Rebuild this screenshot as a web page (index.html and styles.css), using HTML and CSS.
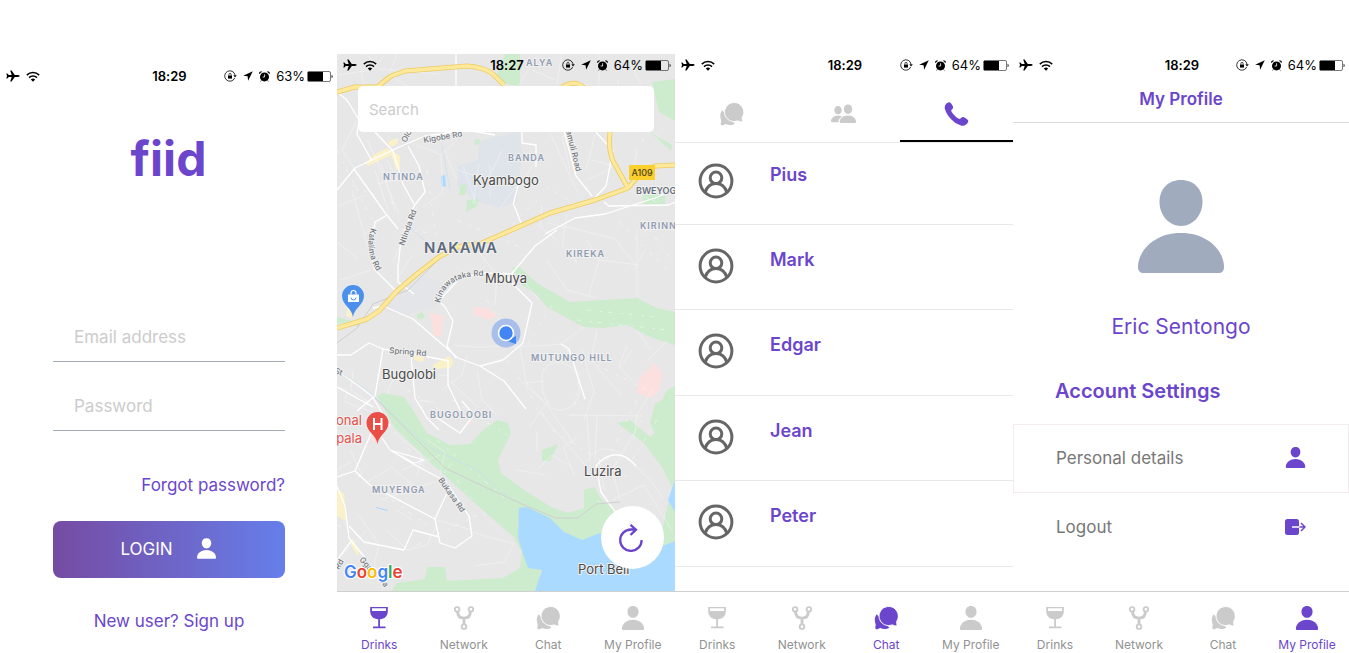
FILE: index.html
```html
<!DOCTYPE html>
<html lang="en">
<head>
<meta charset="utf-8">
<meta name="viewport" content="width=device-width, initial-scale=1">
<title>fiid</title>
<link rel="stylesheet" href="styles.css">
</head>
<body>
<svg class="sprite" aria-hidden="true">
  <symbol id="plane" viewBox="0 0 14 12"><path d="M13.6 6c0-.7-1-.9-2-.9H8.8L5.6.4H4.2l1.5 4.7H2.8L1.3 3.6H.3L1 6l-.7 2.4h1l1.5-1.5h2.9l-1.5 4.7h1.4l3.2-4.7h2.8c1 0 2-.2 2-.9z"/></symbol>
  <symbol id="wifi" viewBox="0 0 14 11"><g fill="none" stroke="currentColor" stroke-width="1.500"><path d="M.8 4.100a8.800 8.800 0 0 1 12.400 0"/><path d="M3 6.600a5.700 5.700 0 0 1 8 0"/></g><path d="M4.800 8.500a3.100 3.100 0 0 1 4.400 0L7 10.800z"/></symbol>
  <symbol id="lock" viewBox="0 0 13 12"><path d="M10.700 8A5.200 5.200 0 1 1 11 5" fill="none" stroke="currentColor" stroke-width=".8"/><path d="M9.400 5.300h3.400L11 7.500z"/><path d="M4 5.600h4v3H4z"/><path d="M4.900 5.800V4.500a1.100 1.100 0 0 1 2.200 0v1.300" fill="none" stroke="currentColor" stroke-width=".7"/></symbol>
  <symbol id="arrow" viewBox="0 0 10 10"><path d="M9.8.2.2 4.700l4.400.5.5 4.500z"/></symbol>
  <symbol id="alarm" viewBox="0 0 11 11"><circle cx="5.500" cy="5.900" r="4.500"/><path d="M.6 2.700A2 2 0 0 1 2.700.7M8.300.7a2 2 0 0 1 2.100 2" fill="none" stroke="currentColor" stroke-width="1.100"/><path d="M2.300 9.500l-.6.900M8.700 9.500l.6.900" stroke="currentColor"/><path d="M5.600 3.300V6H3.600" fill="none" stroke="#fff" stroke-width=".8"/></symbol>
  <symbol id="battery" viewBox="0 0 26 11"><rect x=".5" y=".5" width="23" height="10" rx="1.500" fill="none" stroke="#555" stroke-width=".8"/><path d="M1 1h15v9H1z"/><path d="M24.600 3.800c1.400.4 1.400 3 0 3.400z"/></symbol>
  <symbol id="person" viewBox="0 0 86 93"><path d="M43 0c13 0 21.500 9 21.500 22S55 46 43 46 21.500 35 21.500 22 30 0 43 0z"/><path d="M43 53c27 0 43 18 43 34 0 4-2 6-6 6H6c-4 0-6-2-6-6 0-16 16-34 43-34z"/></symbol>
  <symbol id="wine" viewBox="0 0 18 22"><path fill-rule="evenodd" d="M.2 0h17.600v4.500C17.800 9 14.500 12 10 12.300V19.600h5.500V21.200H3V19.600h5.200V12.300C3.500 12 .2 9 .2 4.500zM2 1.300v2.600h14V1.300z"/></symbol>
  <symbol id="network" viewBox="0 0 21 25"><g fill="none" stroke="currentColor"><g stroke-width="1.900"><circle cx="3.300" cy="3.500" r="2.400"/><circle cx="17.700" cy="3.500" r="2.400"/><circle cx="10.500" cy="21.500" r="2.400"/></g><path d="M3.900 6c0 4.700 3.100 6.600 6.600 6.600s6.600-1.900 6.600-6.600M10.500 12.500v6.500" stroke-width="3"/></g></symbol>
  <symbol id="chat" viewBox="0 0 24 25"><path d="M2.200 8.500C-.6 12.500.3 16.500 1.200 19c.4 1.800-1.200 4 .3 5 1.500.7 3-.7 4.500-1.200 3.500 1.900 7 1.200 9.500-.2z"/><path class="bubble" d="M13.900.5A10 10 0 1 0 18.500 19.700c1.500.3 4 1.700 4.700.9.700-.9-.4-3-.1-4.500A10.100 10.100 0 0 0 13.900.5z"/></symbol>
  <symbol id="people" viewBox="0 0 25 19"><path d="M7 1.500c2.300 0 3.700 1.700 3.700 4.100S9.300 9.800 7 9.800 3.400 8 3.400 5.600 4.700 1.500 7 1.500zM11 12c-1.300-.8-2.700-1-4-1-4 0-7 3-7 5.500 0 1 .5 1.300 1.200 1.300h6.300c0-2.300 1-4.300 3.500-5.800z"/><path d="M17 0c2.500 0 4.200 1.900 4.200 4.600S19.500 9.400 17 9.400s-4.200-2.100-4.200-4.800S14.500 0 17 0zM17 11c5 0 8 3 8 6 0 1-.5 1.500-1.400 1.500H10.200c-.9 0-1.400-.5-1.400-1.500 0-3 3.200-6 8.200-6z"/></symbol>
  <symbol id="phone" viewBox="0 0 24 24"><path d="M1.300 2.300C2.400.8 4.300-.4 5.600.5c1.400 1.100 2.700 3.100 3 4.600.2 1.200-.8 1.800-1.500 2.600-.6.700-.4 1.300 0 2 1.700 2.700 4 5 6.800 6.900.8.500 1.500.6 2.100 0 .9-.8 1.500-1.900 2.800-1.600 1.500.4 3.300 1.800 4.500 3.100 1.200 1.400-.4 3.300-1.800 4.500-1.300 1.200-3 1.500-5 .9C8.700 20.800 2.800 14.400.5 7.200-.1 5.400.2 3.600 1.300 2.300z"/></symbol>
  <symbol id="contact" viewBox="0 0 36 36"><g fill="none" stroke="currentColor" stroke-width="3"><circle cx="18" cy="18" r="15.900"/><circle cx="18" cy="14.800" r="5.800"/><path d="M7 29.500c2-6 6-8.900 11-8.900s9 2.900 11 8.900"/></g></symbol>
  <symbol id="logout" viewBox="0 0 21 16"><path d="M2.500 0h9Q14 0 14 2.500v11Q14 16 11.500 16h-9Q0 16 0 13.500v-11Q0 0 2.500 0z"/><path d="M7 8h7.500" stroke="#fff" stroke-width="1.500" fill="none"/><path d="M14.500 8h5.500M16 4l4 4-4 4" stroke="currentColor" stroke-width="1.500" fill="none"/></symbol>
  <symbol id="refresh" viewBox="0 0 24 28"><path d="M22.600 16a10.700 10.700 0 1 1-10.700-10.500h5M11.500.800l5.500 4.900-5.500 5.300" fill="none" stroke="currentColor" stroke-width="2.300"/></symbol>
</svg>

<main class="screens">

  <section class="screen screen-login" aria-label="Log in">
    <div class="status">
      <div class="status-left"><svg class="i-plane"><use href="#plane"/></svg><svg class="i-wifi"><use href="#wifi"/></svg></div>
      <time class="status-time">18:29</time>
      <div class="status-right"><svg class="i-lock"><use href="#lock"/></svg><svg class="i-arrow"><use href="#arrow"/></svg><svg class="i-alarm"><use href="#alarm"/></svg><span>63%</span><svg class="i-battery"><use href="#battery"/></svg></div>
    </div>
    <h1 class="logo">fiid</h1>
    <form class="login">
      <input class="field" type="email" placeholder="Email address" aria-label="Email address">
      <input class="field" type="password" placeholder="Password" aria-label="Password">
      <a class="forgot" href="#forgot">Forgot password?</a>
      <button class="login-button" type="button">LOGIN <svg><use href="#person"/></svg></button>
      <a class="signup" href="#signup">New user? Sign up</a>
    </form>
  </section>

  <section class="screen" aria-label="Drinks">
    <div class="map-area">
      <svg class="map" viewBox="0 54 338 537" preserveAspectRatio="xMidYMid slice" role="img" aria-label="Map of Kampala">
        <rect y="54" width="338" height="537" fill="#e7e7e7"/>
        <g fill="#dfe3ea">
          <path d="M142 141l41-10 2 22-5 48-17 7-25-7-18-15 1-20 20-6z"/>
          <path d="M60 291l20-17 28 10-8 22-32 9-26-6z" opacity=".5"/>
        </g>
        <g fill="#cdebcd">
          <path d="M168 54h15v32l-14-2-9-10z"/>
          <path d="M315 82l23-3v42l-16-9zM313 132l22 13-1 6zM305 195h23v11l-21-2z"/>
          <path d="M123 185l6-1-1 11h-6zM130 200l12-1-2 7-11 6zM137 140l6-1-1 5-4 1z"/>
          <path d="M80 315l4-3 4 3-2 4h-6zM0 317l15 4-15 3zM16 325l6-3v5z"/>
          <path d="M175 268l7-1 18 16 33 19 34-2 33-2 20 10 18 4v33l-25-8-23-12-23 3-20-1-17-9-20-11-10-12-15-10z"/>
          <path d="M40 396l6-3 21 4 11 16 12 20 23 12 20-1 14-15 13-9 11 3 3 10-13 27 3 13 23 17 27 17 17 6 16-5v-18l10-3 8 13 12 10 0 30H200l5 25-6 33H50l10-15 28-4 2-12h18l2 14 56-3 17-10 2-16-8-15-36-31-47-43-37-36z"/>
          <path d="M325 400l5-10 8-4v155l-20 8-15-18 23-4 9-40-10-20-18-24-27-20 13-3 20 17 5-4-5-10 5-19zM205 450l16-6-8 17h-8z"/>
        </g>
        <g fill="#aadaff">
          <path d="M182 508l8-1 23 11 14 14 18 8 18-7 20 10 40 4 15-6v50H198l7-21-14-2-5-14-5-16z"/>
          <path d="M338 480l-7 20 7 12zM104 176l4-1 1 11-4 1zM39 507l12 3-1 1-11-3z"/>
        </g>
        <g fill="#fbe0df">
          <path d="M93 313l14 3-3 20-7 1zM137 307l13 1 10 8-8 4-15-5zM303 377l15-14 8 12-4 16-8 7-15-5zM130 423l6-3-2 6zM33 434l8 2v8l-6-2z"/>
        </g>
        <g fill="#fbf1c9">
          <path d="M28 163l10-9 12-6 13 8v14l-4-1-5-14-23 11zM51 142l9-4 1 6-8 3zM96 365l16-9 5 6-4 6-16 1zM77 355l10 2-1 5-9-2zM10 308l8 2-4 8-5-2zM0 490l7 3 2 28-9-5zM15 538l8 14-3 3-7-12z"/>
        </g>
        <g class="thin">
          <path d="M0 75l35-5 12-14M30 54l12 15 60 5M60 54l-8 20 18 12M180 88l20-32M195 70l23 10M225 54l-5 30M262 54v32M290 58l14 26M24 70l5 24M20 120l-15 30 20 30M30 140l12 26 20 48M38 170l14 44M44 163l14 48M50 160l10 20-20 4M80 145l24 10 2 38-20 14M104 155l16-15M107 150l13 30M120 170l38 12M126 166l13 38M142 164l-6 40M153 165v33M165 150l-12 25M163 208l18-24M225 135l8 34M213 133l28 60M258 135l-9 35M255 160l22 6M251 180l30-16M300 150l-5 35M195 166l-10 18M205 205l-2 22 18 14M290 190l30 12M230 215l-5 30 15 18M210 260l20 30 30 8M250 240l12 20-10 35M300 230v65M262 260l40 5M226 226l52 13 20 25M140 250l20 25-2 30M80 207l-24 55M50 215l-22 19M15 190l15 55M0 207l28-12"/>
          <path d="M117 345l22 2 62-1 23-2M183 347l7 40 16 14M224 344l23-17M205 380c-2-22 26-22 34-6s2 34-14 36-20-18-20-30M185 383l22-2M245 350l12 42-10 28M260 330l-6 30 30 35M290 346l-8 20 14 16M300 330l14 20M315 390l-15 25-3 24M60 370l-10 24M85 373l27 3M112 380l30 28M130 355l-5 20-20 15M88 415l-5-15 14 2M140 370l5 30 15 15M0 387l10 3-2 12 35 13M16 370l-2 20 25 18M190 383l20 22 28 40M212 400l-20 28M230 415l75 1M250 416l3 46M260 416l-2 45M305 420l-30 50 8 30M240 438l-14 9 12 30M199 408l50 58M249 462c10-15 24-18 40-4s30 26 36 40M267 490l-5-32M275 500l32-15 28 46M200 470l15-15 20 12M180 470l28 5"/>
          <path d="M0 430l25 18M0 470l14-8M30 482l25-15 20 18M43 500l55-18M60 435l25 20-5 22M65 470l38-15M90 440l18 12-5 22M22 515l20 30-5 20M50 530l20 20 20-5 10-20M100 520l35 10M135 532l42 12-10 18-30 4M0 560l30-30M13 450l12 25M115 463l-8 10M60 510l15 10M200 432v20M0 242l20 16M4 280l30-10M60 280l15-25M240 100l10 30M190 285l12 15M210 222l18 6M308 250l-12 20M320 225l-15 8M330 340l-20 22M295 350l-12 18"/>
        </g>
        <g class="dashes"><path d="M8 100l30 30M15 185l45 20M55 105l5 36M90 170l8 60M65 230l40 4M120 220l70 30M150 300l30 50M170 360l40 60M215 305l-25 40M230 350l80 40M245 360l-10 60M215 430l80 50M300 400l-30 60M260 500l40 30M30 400l60 70M20 475l70 50M80 545l60-30M0 525l40 20M115 400l55 35M320 420l-25 40M330 270l-50-50M200 180l60 40M240 320l90 10M250 310l70 7M296 100l30 45M305 220l30 40M70 390l50 30M100 440l70 60M120 480l40 50M0 150l40 80M280 80l30 70M160 240l40-40"/></g>
        <g class="wide">
          <path d="M0 92l10 8 12 20-2 14 15 27M38 132l18 19 10 33 11 20M71 146l11 20 6 26-11 14M17 169l32 45 12 15M0 190l18-22 42-20 28-12 42-6 28 5M77 206l-13 34-3 27v15l16 12M50 215l-12 7-5 25 4 22 24 24M185 131v12l14 2v22M177 205l7 18M183 178l-7 27M119 54v32M227 131l12 45 16 20M258 131l18 20-7 35-14 15M267 202l5 4 60-1 6-3M338 190l-20 8-50 16-30 4-30 16"/>
          <path d="M220 230l-22 16-21 25-6 8 24 24-9 40-20 17-23 6-22-8-45-39-30-13-10 2M174 274l-30-1-22 6-20 22 6 6 8 14-6 25 9 12M0 355h14l18-12 14 6 36 6 30 6M46 349l-8 47-18 15M74 356l4 42 12 20 12 12M111 360v25l12 25M143 366l24 15 22 28M0 370l35 26 18 30M0 387l36 20M125 401l12 14-14 18-24-16M41 417l-23 54-18 6M18 471l15 14 65 34 12-26M98 519l5 24 15 5 17-12-3-20-20-30M102 537l-26-7-9 20-40-8-15-16M53 450l34 10-10 3-24-13M45 438l8 12 25 15 32 17M0 486l8 20 4 32 18 22M0 560l15-20M259 466c12-15 28-15 40 0M259 466l5 26 20 28M224 344l8 5 16 50"/>
        </g>
        <path d="M0 343l20-15 16-24 35-14 20-20 14-14c18-8 30-8 40-4M38 398l70 70 42 20 35 16 34 14 22 0 18-14 24-2" fill="none" stroke="#cfcfcf"/>
        <path d="M70 225l23 20M105 145l8 45M0 370l30 20 60 56 50 24 34 30" fill="none" stroke="#c9dfec" stroke-width=".7"/>
        <g class="highway-edge"><path id="hwyA" d="M0 92l18-5 22 0 14-11 14-5 62-5q18 1 27 9l10 10M225 87q14-8 22 1 25 17 26 45-2 16 3 28l15 27"/><path id="hwyB" d="M338 165l-20 1-15 8-12 14-33 12-45 13-43 19-25 11-25 4-18 10-22 17-20 17-18 20-12 8-30 9"/></g>
        <g class="highway"><use href="#hwyA"/><use href="#hwyB"/></g>

        <g class="road-name">
          <text transform="translate(87 143) rotate(-10)">Kigobe Rd</text>
          <text transform="translate(69 143) rotate(-63)">Olo</text>
          <text transform="translate(229 131) rotate(76)">amuli Road</text>
          <text transform="translate(67 246) rotate(-70)">Ntinda Rd</text>
          <path id="kat" d="M34 228q-8 26 10 49" fill="none"/><text><textPath href="#kat">Katalima Rd</textPath></text>
          <path id="kin" d="M103 303q5-28 44-27" fill="none"/><text><textPath href="#kin">Kinawataka Rd</textPath></text>
          <text transform="translate(52 353) rotate(5)">Spring Rd</text>
          <text transform="translate(101 480) rotate(55)">Bukasa Rd</text>
          <text transform="translate(22 560) rotate(48)">Gga</text>
          <text transform="translate(42 580) rotate(55)">ba</text>
          <text transform="translate(2 570) rotate(-60)">Rd</text>
          <text transform="translate(-3 373) rotate(20)">St</text>
        </g>
        <g class="district">
          <text x="189" y="66">ALYA</text><text x="171" y="161">BANDA</text><text x="46" y="180">NTINDA</text>
          <text x="303" y="229">KIRINN</text><text x="229" y="257">KIREKA</text><text x="194" y="361">MUTUNGO HILL</text>
          <text x="93" y="418">BUGOLOOBI</text><text x="35" y="493">MUYENGA</text>
          <text class="dark" x="299" y="194">BWEYOG</text>
        </g>
        <text class="city" x="87" y="253">NAKAWA</text>
        <g class="town">
          <text x="136" y="185">Kyambogo</text><text x="148" y="283">Mbuya</text><text x="45" y="379">Bugolobi</text>
          <text x="247" y="476">Luzira</text><text x="241" y="574">Port Bell</text>
        </g>
        <g class="hospital"><text x="25" y="425">onal</text><text x="25" y="443">pala</text></g>
        <rect x="292" y="165" width="26" height="15" rx="1" fill="#fbcf2c"/><text class="shield" x="305" y="176">A109</text>
        <path d="M16 317c-1-9-11-12-11-21a11 11 0 0 1 22 0c0 9-10 12-11 21z" fill="#4c90ed"/>
        <path d="M11 294.500h11V302H11z" fill="#fff"/><path d="M14 294.500v-1.500a2.500 2.500 0 0 1 5 0v1.500" fill="none" stroke="#fff" stroke-width="1.200"/><path d="M14 297.500a2.500 2.500 0 0 0 5 0" fill="none" stroke="#4c90ed"/>
        <path d="M40.500 444c-1-9-11-12-11-21a11 11 0 0 1 22 0c0 9-10 12-11 21z" fill="#ea4f47"/><path d="M37 418v12M44.500 418v12M37 424h7.500" stroke="#fff" stroke-width="2" fill="none"/>
        <circle cx="169" cy="333" r="14.500" fill="#7ea5ee" opacity=".6"/><path d="M179 336v8l-9-3z" fill="#4285f4"/><circle cx="169" cy="333" r="7.500" fill="#4285f4" stroke="#fff" stroke-width="1.600"/>
        <text class="google" x="7" y="578"><tspan fill="#4285f4">G</tspan><tspan fill="#ea4335">o</tspan><tspan fill="#fbbc05">o</tspan><tspan fill="#4285f4">g</tspan><tspan fill="#34a853">l</tspan><tspan fill="#ea4335">e</tspan></text>
      </svg>
      <div class="map-top">
        <div class="status">
          <div class="status-left"><svg class="i-plane"><use href="#plane"/></svg><svg class="i-wifi"><use href="#wifi"/></svg></div>
          <time class="status-time">18:27</time>
          <div class="status-right"><svg class="i-lock"><use href="#lock"/></svg><svg class="i-arrow"><use href="#arrow"/></svg><svg class="i-alarm"><use href="#alarm"/></svg><span>64%</span><svg class="i-battery"><use href="#battery"/></svg></div>
        </div>
        <input class="search" type="search" placeholder="Search" aria-label="Search">
      </div>
      <button class="refresh" type="button" aria-label="Refresh"><svg><use href="#refresh"/></svg></button>
    </div>
    <nav class="tabs">
      <a class="active" href="#drinks"><svg class="i-wine"><use href="#wine"/></svg>Drinks</a>
      <a href="#network"><svg><use href="#network"/></svg>Network</a>
      <a href="#chat"><svg><use href="#chat"/></svg>Chat</a>
      <a href="#profile"><svg><use href="#person"/></svg>My Profile</a>
    </nav>
  </section>

  <section class="screen" aria-label="Chat">
    <div class="status">
      <div class="status-left"><svg class="i-plane"><use href="#plane"/></svg><svg class="i-wifi"><use href="#wifi"/></svg></div>
      <time class="status-time">18:29</time>
      <div class="status-right"><svg class="i-lock"><use href="#lock"/></svg><svg class="i-arrow"><use href="#arrow"/></svg><svg class="i-alarm"><use href="#alarm"/></svg><span>64%</span><svg class="i-battery"><use href="#battery"/></svg></div>
    </div>
    <nav class="top-tabs">
      <a href="#messages" aria-label="Messages"><svg><use href="#chat"/></svg></a>
      <a href="#groups" aria-label="Groups"><svg><use href="#people"/></svg></a>
      <a class="active" href="#calls" aria-label="Calls"><svg><use href="#phone"/></svg></a>
    </nav>
    <ul class="contacts">
      <li><svg><use href="#contact"/></svg><span>Pius</span></li>
      <li><svg><use href="#contact"/></svg><span>Mark</span></li>
      <li><svg><use href="#contact"/></svg><span>Edgar</span></li>
      <li><svg><use href="#contact"/></svg><span>Jean</span></li>
      <li><svg><use href="#contact"/></svg><span>Peter</span></li>
    </ul>
    <nav class="tabs">
      <a href="#drinks"><svg class="i-wine"><use href="#wine"/></svg>Drinks</a>
      <a href="#network"><svg><use href="#network"/></svg>Network</a>
      <a class="active" href="#chat"><svg><use href="#chat"/></svg>Chat</a>
      <a href="#profile"><svg><use href="#person"/></svg>My Profile</a>
    </nav>
  </section>

  <section class="screen" aria-label="My Profile">
    <div class="status">
      <div class="status-left"><svg class="i-plane"><use href="#plane"/></svg><svg class="i-wifi"><use href="#wifi"/></svg></div>
      <time class="status-time">18:29</time>
      <div class="status-right"><svg class="i-lock"><use href="#lock"/></svg><svg class="i-arrow"><use href="#arrow"/></svg><svg class="i-alarm"><use href="#alarm"/></svg><span>64%</span><svg class="i-battery"><use href="#battery"/></svg></div>
    </div>
    <h2 class="title">My Profile</h2>
    <div class="profile">
      <svg class="avatar"><use href="#person"/></svg>
      <p class="profile-name">Eric Sentongo</p>
    </div>
    <h3 class="settings-title">Account Settings</h3>
    <div class="settings">
      <a class="boxed" href="#details">Personal details <svg class="i-person"><use href="#person"/></svg></a>
      <a href="#logout">Logout <svg class="i-logout"><use href="#logout"/></svg></a>
    </div>
    <nav class="tabs">
      <a href="#drinks"><svg class="i-wine"><use href="#wine"/></svg>Drinks</a>
      <a href="#network"><svg><use href="#network"/></svg>Network</a>
      <a href="#chat"><svg><use href="#chat"/></svg>Chat</a>
      <a class="active" href="#profile"><svg><use href="#person"/></svg>My Profile</a>
    </nav>
  </section>

</main>
</body>
</html>
```
FILE: styles.css
```css
:root {
  --purple: #6b46cc;
  --muted: #cbcbcb;
  --slate: #a0abbd;
}

* { box-sizing: border-box; }

body {
  margin: 0;
  background: #fff;
  font-family: Inter, "Liberation Sans", sans-serif;
  font-variant-ligatures: none;
  color: #000;
}

a { color: inherit; text-decoration: none; }
svg { fill: currentColor; flex: none; }
.sprite { position: absolute; width: 0; height: 0; }

.screens {
  display: grid;
  grid-template-columns: 337fr 338fr 338fr 336fr;
  min-height: 100vh;
  padding-top: 54px;
}

.screen { display: flex; flex-direction: column; min-width: 0; }

/* Status bar */
.status {
  display: grid;
  grid-template-columns: 1fr auto 1fr;
  align-items: center;
  height: 22px;
  padding: 0 4px 0 6px;
  font-size: 13px;
  line-height: 22px;
}
.status-left, .status-right { display: flex; align-items: center; }
.status-left { gap: 6px; }
.status-right { justify-content: flex-end; gap: 6px; }
.status-right span { margin-right: -4px; }
.status-time { font-weight: 600; }
.i-plane { width: 14px; height: 12px; }
.i-wifi { width: 14px; height: 11px; }
.i-lock { width: 13px; height: 12px; }
.i-arrow { width: 10px; height: 10px; }
.i-alarm { width: 11px; height: 11px; }
.i-battery { width: 26px; height: 11px; }

/* Login */
.screen-login { padding-top: 11px; }
.logo {
  margin: 42px 0 0;
  font-size: 48px;
  line-height: 60px;
  font-weight: 700;
  text-align: center;
  color: var(--purple);
}
.login {
  display: flex;
  flex-direction: column;
  margin: 123px 52px 0 53px;
  font-size: 17px;
  line-height: 24px;
  color: var(--purple);
}
.field {
  width: 100%;
  height: 50px;
  margin-bottom: 19px;
  padding: 0 21px;
  border: 0;
  border-bottom: 1px solid var(--slate);
  border-radius: 0;
  background: none;
  font: inherit;
}
.field::placeholder, .search::placeholder { color: #ccc; opacity: 1; }
.forgot { align-self: flex-end; margin-top: 23px; }
.login-button {
  display: flex;
  align-items: center;
  justify-content: center;
  gap: 24px;
  height: 57px;
  margin: 24px 0 31px;
  padding: 0 2px 2px 0;
  border: 0;
  border-radius: 8px;
  background: linear-gradient(90deg, #764ba2, #667eea);
  color: #fff;
  font: inherit;
}
.login-button svg { width: 19px; height: 21px; }
.signup { align-self: center; }

/* Map */
.map-area { position: relative; flex: 1; min-height: 537px; overflow: hidden; }
.map { position: absolute; inset: 0; width: 100%; height: 100%; }
.map-top { position: relative; }
.search {
  display: block;
  width: calc(100% - 42px);
  height: 46px;
  margin: 10px 21px 0;
  padding: 0 11px;
  border: 0;
  border-radius: 5px;
  background: #fff;
  font: 15px/24px Inter, "Liberation Sans", sans-serif;
}
.refresh {
  position: absolute;
  right: 11px;
  bottom: 22px;
  display: grid;
  place-items: center;
  width: 63px;
  height: 63px;
  padding: 0 4px 0 0;
  border: 0;
  border-radius: 50%;
  background: #fff;
  color: var(--purple);
}
.refresh svg { width: 24px; height: 28px; }

.thin, .wide, .dashes, .highway, .highway-edge { fill: none; stroke: #fff; stroke-linejoin: round; }
.thin { stroke-width: .7; opacity: .5; }
.dashes { stroke-width: .8; stroke-dasharray: 4 9 2 6; opacity: .6; }
.wide { stroke-width: 1.3; }
.highway-edge { stroke: #eecb62; stroke-width: 5; }
.highway { stroke: #fce99c; stroke-width: 3.4; }
.map text { stroke: #f1f1f1; stroke-width: 2px; stroke-linejoin: round; paint-order: stroke; }
.road-name { font-size: 8px; fill: #71767c; font-weight: 500; }
.district { font-size: 9px; font-weight: 600; letter-spacing: 1px; fill: #8f9bb0; }
.district .dark { fill: #66707c; letter-spacing: 0; }
.city { font-size: 15px; font-weight: 600; letter-spacing: 1px; fill: #5d6a7c; }
.town { font-size: 13px; fill: #4a4a4a; }
.hospital { font-size: 13px; fill: #e5524b; text-anchor: end; }
.map .shield { font-size: 9px; font-weight: 500; fill: #4d4420; stroke: none; text-anchor: middle; }
.map .google { font-size: 17px; font-weight: 600; stroke: #fff; }

/* Bottom navigation */
.tabs {
  display: grid;
  grid-template-columns: repeat(4, 1fr);
  margin-top: auto;
  height: 62px;
  padding-top: 14px;
  border-top: 1px solid #cfcfcf;
  background: #fff;
  font-size: 12px;
  line-height: 16px;
  color: #929292;
}
.tabs a { display: flex; flex-direction: column; align-items: center; gap: 7px; }
.tabs svg { width: 24px; height: 24px; color: var(--muted); }
.tabs .i-wine { padding: 1px; }
.tabs .active, .tabs .active svg { color: var(--purple); }
.bubble { stroke: #fff; stroke-width: 1; }

/* Chat */
.top-tabs {
  display: grid;
  grid-template-columns: repeat(3, 1fr);
  height: 67px;
  border-bottom: 1px solid #e9e9e9;
  color: var(--muted);
}
.top-tabs a { display: grid; place-items: center; padding-top: 10px; }
.top-tabs svg { width: 25px; height: 24px; }
.top-tabs .active { color: var(--purple); border-bottom: 2px solid #000; padding-top: 12px; }
.contacts { margin: 0; padding: 0; list-style: none; }
.contacts li {
  display: flex;
  gap: 36px;
  height: 86px;
  padding: 23px 23px 0;
  border-bottom: 1px solid #e9e9e9;
}
.contacts li:nth-child(even) { height: 85px; }
.contacts li:first-child { height: 82px; padding-top: 20px; }
.contacts svg { width: 36px; height: 36px; color: #666; }
.contacts span { font-size: 18px; line-height: 24px; font-weight: 600; color: var(--purple); }

/* Profile */
.title {
  margin: 0;
  padding: 11px 0;
  border-bottom: 1px solid #dcdce0;
  font-size: 17px;
  line-height: 24px;
  font-weight: 600;
  text-align: center;
  color: var(--purple);
}
.profile { display: flex; flex-direction: column; align-items: center; padding-top: 57px; }
.avatar { width: 86px; height: 93px; color: var(--slate); }
.profile-name { margin: 42px 0 0; font-size: 21px; line-height: 24px; color: var(--purple); }
.settings-title { margin: 40px 42px 21px; font-size: 20px; line-height: 24px; font-weight: 600; color: var(--purple); }
.settings { font-size: 17px; line-height: 24px; color: #777; }
.settings a {
  display: flex;
  align-items: center;
  justify-content: space-between;
  height: 69px;
  padding: 0 42px 2px;
  border: 1px solid transparent;
}
.settings .boxed { border-color: #f3ebee; }
.settings svg { color: var(--purple); }
.i-person { width: 21px; height: 21px; }
.i-logout { width: 21px; height: 16px; }
```
